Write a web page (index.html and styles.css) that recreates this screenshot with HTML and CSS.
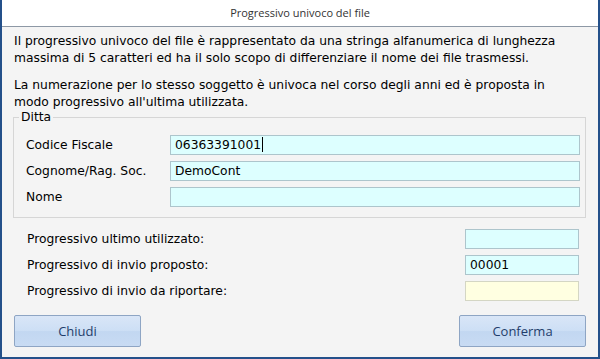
FILE: index.html
```html
<!DOCTYPE html>
<html lang="it">
<head>
  <meta charset="UTF-8" />
  <title>Progressivo univoco del file</title>
  <link rel="stylesheet" href="styles.css">
</head>
<body>

<div class="window">
  <div class="titlebar">Progressivo univoco del file</div>
  <div class="content">
    <p class="intro">Il progressivo univoco del file è rappresentato da una stringa alfanumerica di lunghezza<br>massima di 5 caratteri ed ha il solo scopo di differenziare il nome dei file trasmessi.</p>
    <p class="intro second">La numerazione per lo stesso soggetto è univoca nel corso degli anni ed è proposta in<br>modo progressivo all'ultima utilizzata.</p>

    <fieldset class="group">
      <legend>Ditta</legend>
      <div class="row">
        <span class="label">Codice Fiscale</span>
        <div class="field">06363391001<span class="caret"></span></div>
      </div>
      <div class="row">
        <span class="label">Cognome/Rag. Soc.</span>
        <div class="field">DemoCont</div>
      </div>
      <div class="row">
        <span class="label">Nome</span>
        <div class="field"></div>
      </div>
    </fieldset>

    <div class="progressivi">
      <div class="row">
        <span class="label">Progressivo ultimo utilizzato:</span>
        <div class="field short"></div>
      </div>
      <div class="row">
        <span class="label">Progressivo di invio proposto:</span>
        <div class="field short">00001</div>
      </div>
      <div class="row">
        <span class="label">Progressivo di invio da riportare:</span>
        <div class="field short yellow"></div>
      </div>
    </div>

    <div class="actions">
      <button class="btn">Chiudi</button>
      <button class="btn">Conferma</button>
    </div>
  </div>
</div>

</body>
</html>
```

FILE: styles.css
```css
body {
  margin: 0;
  font-family: "DejaVu Sans", Verdana, sans-serif;
  font-size: 12.3px;
  color: #000;
}
.window {
  width: 600px;
  height: 359px;
  box-sizing: border-box;
  border: 2px solid #24508a;
  border-top: none;
  background: #f4f4f4;
  display: flex;
  flex-direction: column;
}
.titlebar {
  height: 26px;
  line-height: 26px;
  background: #fff;
  border-bottom: 1px solid #8d98a5;
  text-align: center;
  font-family: "Open Sans", sans-serif;
  font-size: 11px;
  color: #333;
}
.content {
  flex: 1;
  display: flex;
  flex-direction: column;
  padding: 6px 12px 10px 12px;
}
.intro {
  margin: 0;
  line-height: 17px;
}
.intro.second {
  margin-top: 10px;
}
.group {
  margin: -1px 0 0 -1px;
  padding: 10px 5px 10px 12px;
  border: 1px solid #d6d6d6;
  display: flex;
  flex-direction: column;
  gap: 6px;
}
.group legend {
  margin-left: -7px;
  padding: 0 2px;
  line-height: 15px;
}
.row {
  display: flex;
  align-items: center;
  height: 20px;
}
.label {
  width: 144px;
  flex: none;
}
.field {
  flex: 1;
  height: 20px;
  box-sizing: border-box;
  border: 1px solid #adc5cc;
  background: #ddffff;
  padding: 0 4px;
  line-height: 18px;
  white-space: nowrap;
}
.caret {
  display: inline-block;
  width: 1px;
  height: 15px;
  background: #000;
  vertical-align: -3px;
  margin-left: 1px;
}
.progressivi {
  margin-top: 11px;
  padding: 0 7px 0 13px;
  display: flex;
  flex-direction: column;
  gap: 6px;
}
.progressivi .label {
  flex: 1;
}
.field.short {
  flex: none;
  width: 114px;
}
.field.yellow {
  background: #ffffe1;
  border-color: #d4d6c4;
}
.actions {
  margin-top: auto;
  display: flex;
  justify-content: space-between;
}
.btn {
  width: 127px;
  height: 32px;
  border: 1px solid #8ea5c4;
  border-radius: 2px;
  background: linear-gradient(#d9e6f7, #cddff5 48%, #c2d7f1 52%, #c8dbf3);
  color: #1f3d6b;
  font-family: "Open Sans", sans-serif;
  font-size: 13px;
  cursor: pointer;
}
```
